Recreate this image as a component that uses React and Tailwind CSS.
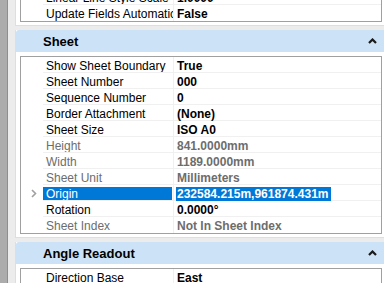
const sheetRows = [
  { label: "Show Sheet Boundary", value: "True" },
  { label: "Sheet Number", value: "000" },
  { label: "Sequence Number", value: "0" },
  { label: "Border Attachment", value: "(None)" },
  { label: "Sheet Size", value: "ISO A0" },
  { label: "Height", value: "841.0000mm", disabled: true },
  { label: "Width", value: "1189.0000mm", disabled: true },
  { label: "Sheet Unit", value: "Millimeters", disabled: true },
  { label: "Origin", value: "232584.215m,961874.431m", selected: true },
  { label: "Rotation", value: "0.0000°" },
  { label: "Sheet Index", value: "Not In Sheet Index", disabled: true },
];

const topRows = [
  { label: "Linear Line Style Scale", value: "1.0000" },
  { label: "Update Fields Automatically", value: "False" },
];

const angleRows = [{ label: "Direction Base", value: "East" }];

function Chevron() {
  return (
    <svg width="9" height="6" viewBox="0 0 9 6" className="block">
      <polyline points="1,5 4.5,1.5 8,5" fill="none" stroke="#1a1a1a" strokeWidth="2.2" />
    </svg>
  );
}

function Row({ row, last }) {
  const line = last ? "" : "border-b border-[#f0f0f0]";
  const text = row.disabled ? "text-[#6d6d6d]" : "text-black";
  return (
    <div className="flex h-[16px]">
      <div className="w-[22px] flex items-center justify-center pl-[3px] pt-px">
        {row.selected && (
          <svg width="6" height="9" viewBox="0 0 6 9">
            <polyline points="1,1 4.5,4.5 1,8" fill="none" stroke="#a0a0a0" strokeWidth="1.6" />
          </svg>
        )}
      </div>
      <div className={`w-[131px] border-r border-[#f0f0f0] ${line} overflow-hidden`}>
        {row.selected ? (
          <div className="mt-[2px] mr-px h-[14px] bg-[#0078d7] text-white pl-[3px] leading-[14px]">
            {row.label}
          </div>
        ) : (
          <div className={`pl-[3px] pt-[3px] leading-[13px] ${text} whitespace-nowrap`}>{row.label}</div>
        )}
      </div>
      <div className={`flex-1 ${line} pl-[2px] font-bold ${text} whitespace-nowrap`}>
        {row.selected ? (
          <div className="mt-[2px] h-[14px] leading-[14px]">
            <span className="bg-[#0078d7] text-white inline-block h-[14px] pl-px pr-[3px]">{row.value}</span>
          </div>
        ) : (
          <div className="pl-px pt-[3px] leading-[13px]">{row.value}</div>
        )}
      </div>
    </div>
  );
}

function Grid({ rows }) {
  return (
    <div className="border border-[#a0a0a0] bg-white">
      {rows.map((row, i) => (
        <Row key={i} row={row} last={i === rows.length - 1} />
      ))}
    </div>
  );
}

function Section({ title, rows }) {
  return (
    <div className="border-l border-b border-[#d7dfe8] bg-white mt-[4px]">
      <div className="h-[22px] bg-[#cce2f7] rounded-tl-[3px] flex items-center justify-between pl-[27px] pr-[7px]">
        <span className="font-bold text-[13px] text-black">{title}</span>
        <Chevron />
      </div>
      <div className="pl-[4px] pr-[2px] pt-[4px] pb-[3px]">
        <Grid rows={rows} />
      </div>
    </div>
  );
}

export default function App() {
  return (
    <div
      className="w-[384px] h-[283px] overflow-hidden flex text-[12px] leading-[15px]"
      style={{ fontFamily: '"Liberation Sans", Arial, sans-serif' }}
    >
      <div className="w-[7px] bg-[#acacac]" />
      <div className="w-px bg-[#8e8e8e]" />
      <div className="flex-1 bg-[#ececec] pl-[7px]">
        <div className="border-l border-b border-[#d7dfe8] bg-white pl-[4px] pr-[2px] pb-[3px] -mt-[12px]">
          <Grid rows={topRows} />
        </div>
        <Section title="Sheet" rows={sheetRows} />
        <Section title="Angle Readout" rows={angleRows} />
      </div>
    </div>
  );
}
